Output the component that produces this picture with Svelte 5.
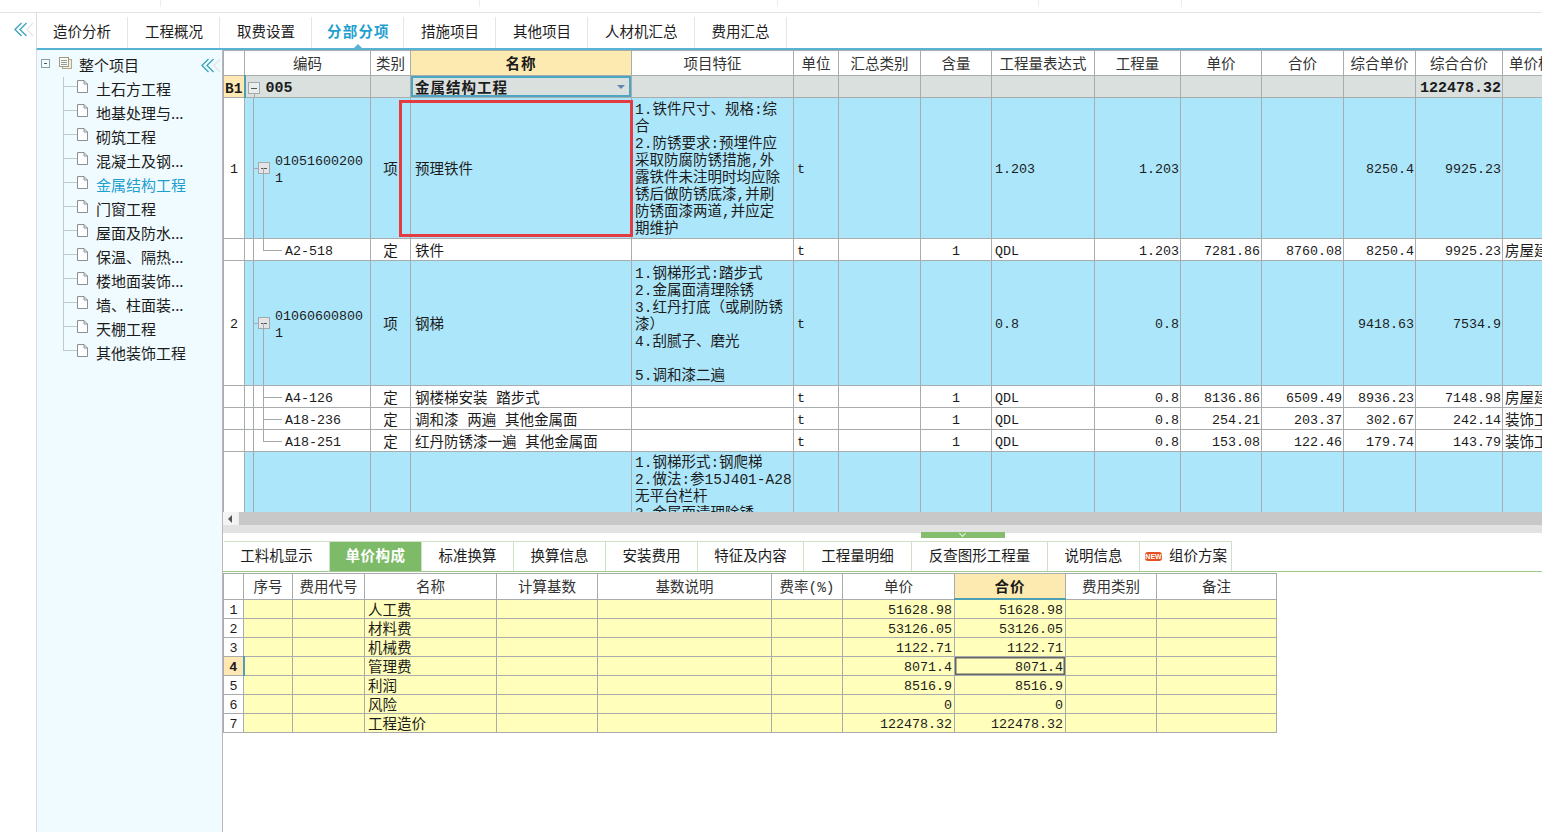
<script lang="ts">
  const topTabs = ['造价分析', '工程概况', '取费设置', '分部分项', '措施项目', '其他项目', '人材机汇总', '费用汇总'];
  const treeItems = ['土石方工程', '地基处理与...', '砌筑工程', '混凝土及钢...', '金属结构工程', '门窗工程', '屋面及防水...', '保温、隔热...', '楼地面装饰...', '墙、柱面装...', '天棚工程', '其他装饰工程'];

  const mainCols = [
    { w: 21, t: '' }, { w: 126, t: '编码' }, { w: 40, t: '类别' }, { w: 221, t: '名称' },
    { w: 162, t: '项目特征' }, { w: 45, t: '单位' }, { w: 82, t: '汇总类别' }, { w: 71, t: '含量' },
    { w: 103, t: '工程量表达式' }, { w: 86, t: '工程量' }, { w: 81, t: '单价' }, { w: 82, t: '合价' },
    { w: 72, t: '综合单价' }, { w: 87, t: '综合合价' }, { w: 100, t: '单价构成文件' }
  ];

  const rows = [
    { kind: 'item', h: 141, no: '1', code: ['01051600200', '1'], type: '项', name: '预理铁件', mark: true,
      feature: ['1.铁件尺寸、规格:综', '合', '2.防锈要求:预埋件应', '采取防腐防锈措施,外', '露铁件未注明时均应除', '锈后做防锈底漆,并刷', '防锈面漆两道,并应定', '期维护'],
      unit: 't', amount: '', expr: '1.203', qty: '1.203', price: '', total: '', cprice: '8250.4', ctotal: '9925.23', file: '' },
    { kind: 'sub', last: true, h: 22, no: '', code: ['A2-518'], type: '定', name: '铁件', feature: [],
      unit: 't', amount: '1', expr: 'QDL', qty: '1.203', price: '7281.86', total: '8760.08', cprice: '8250.4', ctotal: '9925.23', file: '房屋建筑与装饰工程' },
    { kind: 'item', h: 125, no: '2', code: ['01060600800', '1'], type: '项', name: '钢梯',
      feature: ['1.钢梯形式:踏步式', '2.金属面清理除锈', '3.红丹打底（或刷防锈', '漆）', '4.刮腻子、磨光', '', '5.调和漆二遍'],
      unit: 't', amount: '', expr: '0.8', qty: '0.8', price: '', total: '', cprice: '9418.63', ctotal: '7534.9', file: '' },
    { kind: 'sub', h: 22, no: '', code: ['A4-126'], type: '定', name: '钢楼梯安装 踏步式', feature: [],
      unit: 't', amount: '1', expr: 'QDL', qty: '0.8', price: '8136.86', total: '6509.49', cprice: '8936.23', ctotal: '7148.98', file: '房屋建筑与装饰工程' },
    { kind: 'sub', h: 22, no: '', code: ['A18-236'], type: '定', name: '调和漆 两遍 其他金属面', feature: [],
      unit: 't', amount: '1', expr: 'QDL', qty: '0.8', price: '254.21', total: '203.37', cprice: '302.67', ctotal: '242.14', file: '装饰工程' },
    { kind: 'sub', last: true, h: 22, no: '', code: ['A18-251'], type: '定', name: '红丹防锈漆一遍 其他金属面', feature: [],
      unit: 't', amount: '1', expr: 'QDL', qty: '0.8', price: '153.08', total: '122.46', cprice: '179.74', ctotal: '143.79', file: '装饰工程' },
    { kind: 'cut', h: 120, no: '', code: [], type: '', name: '',
      feature: ['1.钢梯形式:钢爬梯', '2.做法:参15J401-A28', '无平台栏杆', '3.金属面清理除锈'],
      unit: '', amount: '', expr: '', qty: '', price: '', total: '', cprice: '', ctotal: '', file: '' }
  ];

  const lowerTabs = [
    { t: '工料机显示', w: 106 }, { t: '单价构成', w: 92 }, { t: '标准换算', w: 92 }, { t: '换算信息', w: 92 },
    { t: '安装费用', w: 92 }, { t: '特征及内容', w: 106 }, { t: '工程量明细', w: 108 }, { t: '反查图形工程量', w: 136 },
    { t: '说明信息', w: 92 }
  ];

  const feeCols = [
    { w: 20, t: '' }, { w: 49, t: '序号' }, { w: 72, t: '费用代号' }, { w: 132, t: '名称' }, { w: 101, t: '计算基数' },
    { w: 174, t: '基数说明' }, { w: 71, t: '费率(%)' }, { w: 112, t: '单价' }, { w: 111, t: '合价' },
    { w: 91, t: '费用类别' }, { w: 120, t: '备注' }
  ];

  const fees = [
    ['人工费', '51628.98'], ['材料费', '53126.05'], ['机械费', '1122.71'], ['管理费', '8071.4'],
    ['利润', '8516.9'], ['风险', '0'], ['工程造价', '122478.32']
  ];

  const ticks = [160, 318, 297, 260, 142];
</script>

{#snippet chevrons()}
  <svg class="chev" width="21" height="15" viewBox="0 0 21 15" aria-hidden="true">
    <path d="M19 1l-6 6.5 6 6.5" fill="none" stroke="#e0e8ec" stroke-width="1.4" />
    <path d="M12.5 1L6 7.5l6.5 6.5M7.5 1L1 7.5 7.5 14" fill="none" stroke="#3fa4c2" stroke-width="1.4" />
  </svg>
{/snippet}

{#snippet docIcon()}
  <svg class="doc" width="11" height="13" viewBox="0 0 11 13" aria-hidden="true">
    <path d="M.5.5h6.500l3.500 3.500v8.500h-10zM7 .5V4h3.500" fill="#fff" stroke="#8a8f92" />
  </svg>
{/snippet}

<div class="app">
  <div class="strip">
    {#each ticks as w, i (i)}
      <span class="tick" style="width:{w}px"></span>
    {/each}
  </div>

  <div class="frame">
    <div class="rail">{@render chevrons()}</div>

    <div class="content">
      <nav class="top-tabs">
        {#each topTabs as tab (tab)}
          <div class="top-tab" class:active={tab === '分部分项'}>{tab}</div>
        {/each}
      </nav>

      <div class="body">
        <aside class="sidebar">
          <div class="root-row">
            <span class="minus small"></span>
            <svg class="docs" width="13" height="12" viewBox="0 0 13 12" aria-hidden="true">
              <rect x="3.500" y="2.500" width="9" height="9" fill="#f3efe2" stroke="#b0a890" />
              <rect x=".5" y=".5" width="9" height="9" fill="#fdfaf0" stroke="#a09a88" />
              <path d="M2 3.500h6M2 5.500h6M2 7.500h6" stroke="#8f9aa0" />
            </svg>
            <span class="root-label">整个项目</span>
            <span class="side-chev">{@render chevrons()}</span>
          </div>
          <ul class="tree">
            {#each treeItems as item (item)}
              <li class:current={item === '金属结构工程'}>
                {@render docIcon()}
                <span class="tree-label">{item}</span>
              </li>
            {/each}
          </ul>
        </aside>

        <section class="panel">
          <div class="grid-wrap">
            <table class="grid main">
              <colgroup>
                {#each mainCols as c, i (i)}
                  <col style="width:{c.w}px" />
                {/each}
              </colgroup>
              <thead>
                <tr style="height:25px">
                  {#each mainCols as c, i (i)}
                    <th class:hot={c.t === '名称'}>{c.t}</th>
                  {/each}
                </tr>
              </thead>
              <tbody>
                <tr class="section" style="height:22px">
                  <td class="row-no on">B1</td>
                  <td class="code">
                    <span class="line v1 from-box"></span>
                    <span class="minus b1"></span>
                    <span class="section-code">005</span>
                  </td>
                  <td></td>
                  <td class="name editing">金属结构工程<span class="drop"></span></td>
                  <td></td><td></td><td></td><td></td><td></td><td></td><td></td><td></td><td></td>
                  <td class="num strong">122478.32</td>
                  <td></td>
                </tr>
                {#each rows as r, i (i)}
                  <tr class={r.kind} style="height:{r.h}px">
                    <td class="row-no">{r.no}</td>
                    <td class="code">
                      <span class="line v1"></span>
                      {#if r.kind === 'item'}
                        <span class="line stub"></span>
                        <span class="minus tree-box"></span>
                        <span class="line v2 lower-half"></span>
                        <div class="code-text item-code">
                          {#each r.code as part, j (j)}<div>{part}</div>{/each}
                        </div>
                      {:else if r.kind === 'sub'}
                        <span class="line v2" class:upper-half={r.last}></span>
                        <span class="line branch"></span>
                        <div class="code-text sub-code">{r.code[0]}</div>
                      {/if}
                    </td>
                    <td class="center">{r.type}</td>
                    <td class="name">
                      {r.name}
                      {#if r.mark}<span class="red-mark"></span>{/if}
                    </td>
                    <td class="feature">
                      {#each r.feature as line, j (j)}<div class="feature-line">{line}</div>{/each}
                    </td>
                    <td class="mono">{r.unit}</td>
                    <td></td>
                    <td class="mono center">{r.amount}</td>
                    <td class="mono">{r.expr}</td>
                    <td class="num">{r.qty}</td>
                    <td class="num">{r.price}</td>
                    <td class="num">{r.total}</td>
                    <td class="num">{r.cprice}</td>
                    <td class="num">{r.ctotal}</td>
                    <td class="file">{r.file}</td>
                  </tr>
                {/each}
              </tbody>
            </table>
          </div>

          <div class="scrollbar">
            <span class="scroll-btn"><span class="arrow"></span></span>
            <span class="scroll-thumb"></span>
          </div>

          <div class="splitter"><span class="handle"><span class="handle-mark"></span></span></div>

          <div class="lower-tabs">
            {#each lowerTabs as tab (tab.t)}
              <div class="lower-tab" class:active={tab.t === '单价构成'} style="width:{tab.w}px">{tab.t}</div>
            {/each}
            <div class="lower-tab plan" style="width:92px">
              <span class="new-badge">NEW</span>组价方案
            </div>
          </div>

          <table class="grid fee">
            <colgroup>
              {#each feeCols as c, i (i)}
                <col style="width:{c.w}px" />
              {/each}
            </colgroup>
            <thead>
              <tr style="height:25px">
                {#each feeCols as c, i (i)}
                  <th class:hot={c.t === '合价'}>{c.t}</th>
                {/each}
              </tr>
            </thead>
            <tbody>
              {#each fees as f, i (i)}
                <tr style="height:19px">
                  <td class="row-no" class:on={i === 3}>{i + 1}</td>
                  <td></td>
                  <td></td>
                  <td class="fee-name">{f[0]}</td>
                  <td></td><td></td><td></td>
                  <td class="num">{f[1]}</td>
                  <td class="num" class:picked={i === 3}>{f[1]}</td>
                  <td></td><td></td>
                </tr>
              {/each}
            </tbody>
          </table>
        </section>
      </div>
    </div>
  </div>
</div>

<style>
  :global(body) {
    margin: 0;
    background: #fff;
  }

  .app {
    --cjk: "Liberation Mono", "Noto Sans CJK SC", monospace;
    width: 1542px;
    height: 832px;
    overflow: hidden;
    display: flex;
    flex-direction: column;
    font-family: var(--cjk);
    font-size: 14.5px;
    color: #1c1c1c;
    background: #fff;
  }

  .strip {
    height: 12px;
    flex: none;
    display: flex;
    border-bottom: 1px solid #e2e2e2;
  }

  .tick {
    height: 7px;
    border-right: 1px solid #ececec;
  }

  .frame {
    flex: 1;
    min-height: 0;
    display: flex;
  }

  .rail {
    width: 36px;
    flex: none;
    box-sizing: border-box;
    padding: 9px 0 0 14px;
  }

  .chev {
    display: block;
  }

  .content {
    flex: 1;
    min-width: 0;
    display: flex;
    flex-direction: column;
  }

  .top-tabs {
    height: 35px;
    flex: none;
    display: flex;
    align-items: flex-end;
    border-bottom: 2px solid #58b2d6;
    border-left: 1px solid #d8dee0;
  }

  .top-tab {
    position: relative;
    box-sizing: border-box;
    height: 31px;
    padding: 2px 16px 0 17px;
    line-height: 29px;
    border-right: 1px solid #e2e6e8;
    white-space: nowrap;
  }

  .top-tab:first-child {
    padding-left: 16px;
  }

  .top-tab.active {
    width: 92px;
    padding: 2px 0 0 15px;
    letter-spacing: 1.2px;
    color: #1f9fd0;
    font-weight: 700;
  }

  .top-tab.active::after {
    content: '';
    position: absolute;
    left: 50%;
    bottom: 0;
    margin-left: -4px;
    border: 4px solid transparent;
    border-top: 0;
    border-bottom-color: #58b2d6;
  }

  .body {
    flex: 1;
    min-height: 0;
    display: flex;
  }

  .sidebar {
    position: relative;
    width: 187px;
    flex: none;
    box-sizing: border-box;
    background: #f0fbff;
    border-left: 1px solid #d8dee0;
    border-right: 1px solid #b8b8b8;
    padding-top: 3px;
    font-family: "Noto Sans CJK SC", sans-serif;
    font-size: 15px;
  }

  .root-row {
    height: 24px;
    display: flex;
    align-items: center;
    padding-left: 4px;
  }

  .minus {
    box-sizing: border-box;
    display: block;
    position: relative;
    background: #e9eded;
    border: 1px solid #a3a9ab;
  }

  .minus::after {
    content: '';
    position: absolute;
    left: 2px;
    right: 2px;
    top: 50%;
    height: 1px;
    margin-top: -0.5px;
    background: #555;
  }

  .minus.small {
    width: 9px;
    height: 9px;
    margin-top: -3px;
    background: #f4fbfd;
    border-color: #8aa0a8;
  }

  .docs {
    margin: -4px 0 0 9px;
  }

  .root-label {
    margin: -2px 0 0 7px;
  }

  .side-chev {
    position: absolute;
    left: 164px;
    top: 8px;
  }

  .tree {
    list-style: none;
    margin: 0;
    padding: 0;
  }

  .tree li {
    position: relative;
    height: 24px;
    display: flex;
    align-items: center;
    padding-left: 40px;
    white-space: nowrap;
  }

  .tree li::before {
    content: '';
    position: absolute;
    left: 26px;
    top: 0;
    width: 13px;
    height: 9px;
    border-left: 1px solid #c4c8ca;
    border-bottom: 1px solid #c4c8ca;
  }

  .tree li:not(:last-child)::after {
    content: '';
    position: absolute;
    left: 26px;
    top: 9px;
    bottom: 0;
    border-left: 1px solid #c4c8ca;
  }

  .tree li.current {
    color: #1f9fd0;
  }

  .tree-label {
    margin-top: -2px;
  }

  .doc {
    margin: -6px 8px 0 0;
    flex: none;
  }

  .panel {
    flex: 1;
    min-width: 0;
    display: flex;
    flex-direction: column;
  }

  .grid-wrap {
    height: 462px;
    flex: none;
    overflow: hidden;
  }

  .grid {
    table-layout: fixed;
    border-collapse: collapse;
    flex: none;
  }

  .grid.main {
    width: 1379px;
  }

  .grid.fee {
    width: 1053px;
    margin-top: 1px;
  }

  .grid th,
  .grid td {
    border: 1px solid #a9acac;
    overflow: hidden;
    white-space: nowrap;
  }

  .grid th {
    padding: 4px 0 0;
    font-weight: 400;
    color: #333;
    background: #fff;
    line-height: 20px;
    text-align: center;
  }

  .grid th.hot {
    font-weight: 700;
    letter-spacing: 1px;
    color: #1a1a1a;
    background: #fdeab0;
  }

  .grid td {
    padding: 4px 0 0;
    line-height: 16px;
  }

  .row-no {
    text-align: center;
    font-size: 13.33px;
    background: #fff;
  }

  .row-no.on {
    font-weight: 700;
    background: #ffe8b4;
    border-right: 2px solid #4f9fb4;
  }

  .center {
    text-align: center;
  }

  .name {
    padding-left: 4px !important;
    position: relative;
    overflow: visible !important;
  }

  .mono {
    font-size: 13.33px;
    padding-left: 3px !important;
  }

  .mono.center {
    padding-left: 0 !important;
  }

  .num {
    font-size: 13.33px;
    text-align: right;
    padding-right: 1px !important;
  }

  .fee .num {
    padding-right: 2px !important;
  }

  .strong {
    font-weight: 700;
    font-size: 15px;
  }

  .file {
    padding-left: 2px !important;
  }

  tr.section td {
    background: #d9e0de;
  }

  tr.section td.row-no {
    background: #ffe8b4;
    font-size: 14.5px;
    font-weight: 700;
  }

  tr.item td:not(.row-no),
  tr.cut td:not(.row-no) {
    background: #ace6fa;
  }

  tr.cut td {
    vertical-align: top;
  }

  tr.cut .feature {
    padding-top: 3px !important;
  }

  .editing {
    font-weight: 700;
    letter-spacing: 1px;
    box-shadow: inset 0 0 0 2px #4ba6c4;
  }

  .drop {
    position: absolute;
    right: 6px;
    top: 9px;
    border: 4px solid transparent;
    border-bottom: 0;
    border-top-color: #5f86b4;
  }

  .red-mark {
    position: absolute;
    left: -12px;
    top: 2px;
    width: 234px;
    height: 137px;
    box-sizing: border-box;
    border: 3px solid #e33b3f;
    pointer-events: none;
  }

  .code {
    position: relative;
  }

  .line {
    position: absolute;
    background: #a4a9aa;
  }

  .v1 {
    left: 8px;
    top: 0;
    bottom: 0;
    width: 1px;
  }

  .v1.from-box {
    top: 15px;
  }

  .stub {
    left: 8px;
    top: 50%;
    width: 5px;
    height: 1px;
  }

  .v2 {
    left: 18px;
    top: 0;
    bottom: 0;
    width: 1px;
  }

  .v2.lower-half {
    top: 50%;
  }

  .v2.upper-half {
    bottom: 50%;
  }

  .branch {
    left: 18px;
    top: 50%;
    width: 19px;
    height: 1px;
  }

  .minus.b1 {
    position: absolute;
    left: 2px;
    top: 6px;
    width: 12px;
    height: 12px;
  }

  .minus.tree-box {
    position: absolute;
    left: 13px;
    top: 50%;
    width: 12px;
    height: 12px;
    margin-top: -6px;
    background: #e4e4e6;
  }

  .section-code {
    margin-left: 20px;
    font-size: 15px;
    font-weight: 700;
  }

  .code-text {
    position: relative;
    font-size: 13.33px;
  }

  .item-code {
    padding-left: 30px;
    line-height: 17px;
  }

  .sub-code {
    padding-left: 40px;
  }

  .feature {
    padding-left: 3px !important;
  }

  .feature-line {
    height: 17px;
    line-height: 17px;
  }

  .scrollbar {
    height: 13px;
    flex: none;
    display: flex;
    background: #c8c8c8;
  }

  .scroll-btn {
    width: 14px;
    background: #f4f4f4;
    display: flex;
    align-items: center;
    justify-content: center;
    margin-right: 3px;
    box-shadow: 2px 0 0 #f0f0f0;
  }

  .arrow {
    border: 4px solid transparent;
    border-left: 0;
    border-right-color: #555;
  }

  .scroll-thumb {
    flex: 1;
  }

  .splitter {
    position: relative;
    height: 8px;
    flex: none;
    background: #e2e2e2;
  }

  .handle {
    position: absolute;
    left: 698px;
    top: 7px;
    width: 84px;
    height: 6px;
    background: #84bd6c;
  }

  .handle-mark {
    position: absolute;
    left: 39px;
    top: -1px;
    width: 4px;
    height: 4px;
    border-right: 1.500px solid #e8f4e2;
    border-bottom: 1.500px solid #e8f4e2;
    transform: rotate(45deg);
  }

  .lower-tabs {
    margin-top: 8px;
    height: 30px;
    flex: none;
    display: flex;
    padding-left: 1px;
    border-bottom: 1px solid #9fca8e;
  }

  .lower-tab {
    box-sizing: border-box;
    height: 30px;
    padding-top: 2px;
    line-height: 27px;
    text-align: center;
    border-top: 1px solid #cfe0c8;
    border-right: 1px solid #cfe0c8;
    white-space: nowrap;
  }

  .lower-tab.active {
    background: #7dbb68;
    color: #fff;
    font-weight: 700;
    letter-spacing: 0.5px;
  }

  .lower-tab.plan {
    display: flex;
    align-items: center;
    padding-left: 5px;
  }

  .new-badge {
    width: 17px;
    height: 9px;
    margin-right: 7px;
    border-radius: 3px;
    background: #e4501f;
    color: #fff;
    font: 700 7px/9px "Liberation Sans", sans-serif;
    text-align: center;
    overflow: hidden;
    margin-top: -2px;
  }

  .fee tbody td {
    padding-top: 4px;
    background: #ffffbb;
    line-height: 14px;
  }

  .fee tbody td.row-no {
    background: #fff;
  }

  .fee tbody td.row-no.on {
    background: #ffe8b4;
  }

  .fee th.hot {
    border-bottom: 2px solid #4f9fb4;
  }

  .fee-name {
    padding-left: 3px !important;
  }

  .fee tbody td.picked {
    box-shadow: inset 0 0 0 1.500px #666;
  }
</style>
